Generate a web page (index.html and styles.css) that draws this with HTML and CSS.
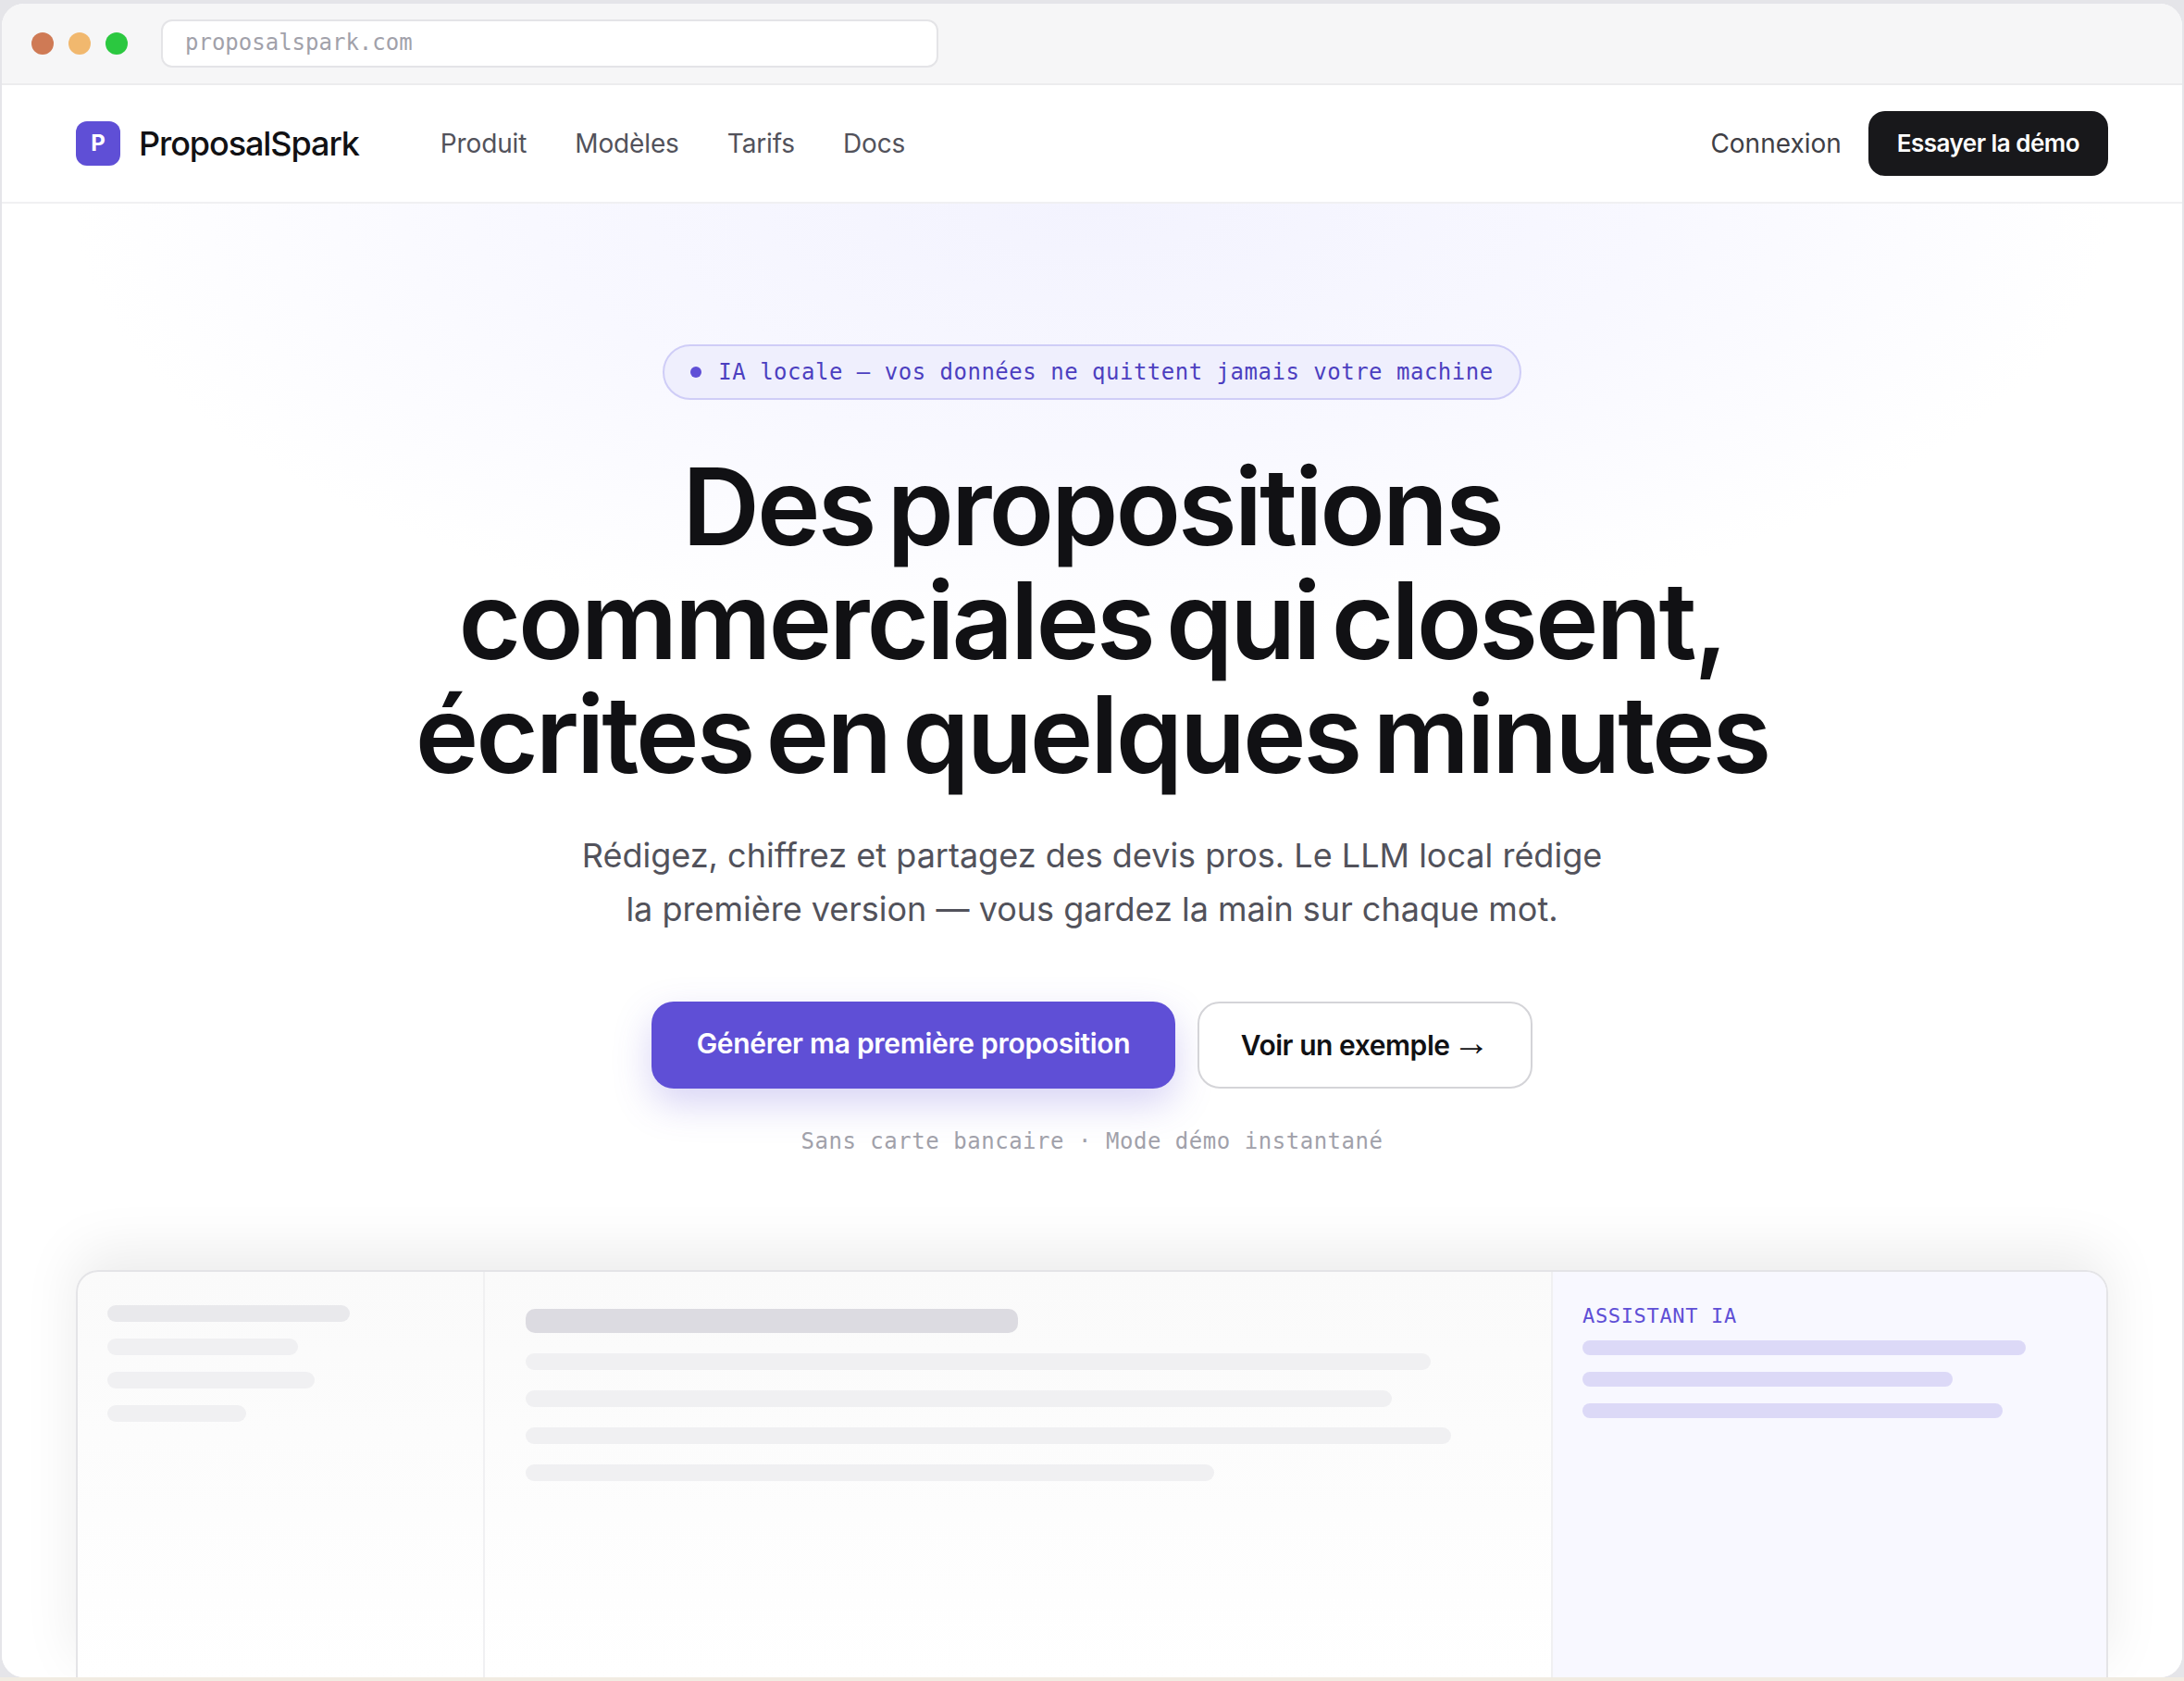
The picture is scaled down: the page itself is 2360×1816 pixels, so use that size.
FILE: index.html
```html
<!DOCTYPE html>
<html lang="fr">

<head>
  <meta charset="UTF-8">
  <meta name="viewport" content="width=device-width, initial-scale=1.0">
  <title>ProposalSpark</title>
  <link rel="stylesheet" href="styles.css">
</head>

<body>
  <div class="window">
    <div class="chrome">
      <div class="dots">
        <span class="dot red"></span>
        <span class="dot yellow"></span>
        <span class="dot green"></span>
      </div>
      <div class="address">proposalspark.com</div>
    </div>

    <nav class="nav">
      <a class="brand" href="#">
        <span class="brand_mark">P</span>
        <span class="brand_name">ProposalSpark</span>
      </a>
      <div class="nav_links">
        <a href="#">Produit</a>
        <a href="#">Modèles</a>
        <a href="#">Tarifs</a>
        <a href="#">Docs</a>
      </div>
      <div class="nav_actions">
        <a class="login" href="#">Connexion</a>
        <a class="btn_dark" href="#">Essayer la démo</a>
      </div>
    </nav>

    <main class="hero">
      <div class="pill"><span class="pill_dot"></span>IA locale — vos données ne quittent jamais votre machine</div>
      <h1>Des propositions<br>commerciales qui closent,<br>écrites en quelques minutes</h1>
      <p class="lead">Rédigez, chiffrez et partagez des devis pros. Le LLM local rédige<br>la première version — vous gardez la main sur chaque mot.</p>
      <div class="cta">
        <a class="btn_primary" href="#">Générer ma première proposition</a>
        <a class="btn_ghost" href="#">Voir un exemple <span class="arrow">→</span></a>
      </div>
      <p class="note">Sans carte bancaire · Mode démo instantané</p>

      <section class="mock">
        <div class="mock_side">
          <div class="bar bar_dark w262"></div>
          <div class="bar w206"></div>
          <div class="bar w224"></div>
          <div class="bar w150"></div>
        </div>
        <div class="mock_main">
          <div class="bar_title"></div>
          <div class="bar w978"></div>
          <div class="bar w936"></div>
          <div class="bar w1000"></div>
          <div class="bar w744"></div>
        </div>
        <div class="mock_ai">
          <div class="ai_label">ASSISTANT IA</div>
          <div class="bar_ai w479"></div>
          <div class="bar_ai w400"></div>
          <div class="bar_ai w454"></div>
        </div>
      </section>
    </main>
  </div>
</body>

</html>
```

FILE: styles.css
```css
* {
  box-sizing: border-box;
  margin: 0;
}

html,
body {
  height: 100%;
}

body {
  padding: 4px 2px;
  background: linear-gradient(#e5e5e9 calc(100% - 4px), #f1ece2 0);
  font-family: Inter, "Noto Sans", sans-serif;
  overflow: hidden;
}

a {
  color: inherit;
  text-decoration: none;
}

.window {
  display: flex;
  flex-direction: column;
  overflow: hidden;
  height: 100%;
  border-radius: 24px;
  background: #fff;
}

/* barre du navigateur */
.chrome {
  display: flex;
  align-items: center;
  gap: 36px;
  flex: none;
  height: 88px;
  padding: 0 32px;
  background: #f6f6f7;
  border-bottom: 2px solid #ececee;
}

.dots {
  display: flex;
  gap: 16px;
}

.dot {
  width: 24px;
  height: 24px;
  border-radius: 50%;
}

.red { background: #cf7a55; }
.yellow { background: #f1b86e; }
.green { background: #2bc840; }

.address {
  width: 840px;
  height: 52px;
  padding: 0 24px;
  border: 2px solid #e4e4e7;
  border-radius: 12px;
  background: #fff;
  color: #a1a1aa;
  font: 24px/46px "DejaVu Sans Mono", monospace;
}

/* nav */
.nav {
  display: flex;
  align-items: center;
  flex: none;
  height: 128px;
  padding: 0 80px;
  border-bottom: 2px solid #f0f0f2;
}

.brand {
  display: flex;
  align-items: center;
  gap: 20px;
}

.brand_mark {
  width: 48px;
  height: 48px;
  border-radius: 12px;
  background: #5f4fd6;
  color: #fff;
  font-size: 24px;
  font-weight: 700;
  line-height: 48px;
  text-align: center;
}

.brand_name {
  color: #111114;
  font-size: 36px;
  font-weight: 500;
  letter-spacing: -0.03em;
}

.nav_links {
  display: flex;
  gap: 52px;
  margin-left: 88px;
  color: #52525b;
  font-size: 28px;
  letter-spacing: -0.005em;
}

.nav_actions {
  display: flex;
  align-items: center;
  gap: 29px;
  margin-left: auto;
}

.login {
  color: #3f3f46;
  font-size: 28px;
}

.btn_dark {
  padding: 0 31px;
  height: 70px;
  border-radius: 18px;
  background: #18181b;
  color: #fff;
  font-size: 26px;
  font-weight: 600;
  line-height: 70px;
  letter-spacing: -0.02em;
}

/* hero */
.hero {
  display: flex;
  flex-direction: column;
  align-items: center;
  flex: 1;
  min-height: 0;
  padding: 152px 80px 0;
  background: radial-gradient(ellipse 1100px 480px at 50% 0, #f3f3fe 0%, #f8f8ff 55%, #fff 100%);
}

.pill {
  display: flex;
  align-items: center;
  gap: 18px;
  height: 60px;
  padding: 0 28px;
  border: 2px solid #cfcdf7;
  border-radius: 30px;
  background: #efeffd;
  color: #4c3fc0;
  font: 24px/1 "DejaVu Sans Mono", monospace;
  letter-spacing: 0.021em;
}

.pill_dot {
  width: 12px;
  height: 12px;
  border-radius: 50%;
  background: #5f4fd6;
}

h1 {
  margin-top: 54px;
  color: #111114;
  font-size: 116px;
  font-weight: 600;
  line-height: 123px;
  letter-spacing: -0.026em;
  word-spacing: -12px;
  text-align: center;
}

.lead {
  margin-top: 40px;
  color: #52525b;
  font-size: 36px;
  line-height: 58px;
  text-align: center;
}

.cta {
  display: flex;
  gap: 24px;
  margin-top: 71px;
}

.btn_primary,
.btn_ghost {
  height: 94px;
  border-radius: 24px;
  font-size: 30px;
  font-weight: 600;
  text-align: center;
}

.btn_primary {
  width: 566px;
  background: #5f4fd6;
  box-shadow: 0 16px 40px rgba(95, 79, 214, 0.25);
  color: #fff;
  line-height: 91px;
  letter-spacing: -0.01em;
}

.btn_ghost {
  width: 362px;
  border: 2px solid #d4d4d8;
  background: #fff;
  color: #111114;
  line-height: 90px;
  letter-spacing: -0.015em;
}

.arrow {
  margin-left: -4px;
  font-family: "Liberation Sans", sans-serif;
  font-size: 40px;
  font-weight: 400;
  line-height: 0;
}

.note {
  margin-top: 41px;
  color: #a1a1aa;
  font: 24px/32px "DejaVu Sans Mono", monospace;
  letter-spacing: 0.022em;
}

/* apercu */
.mock {
  display: grid;
  grid-template-columns: 440px 1154px 1fr;
  flex: 1;
  align-self: stretch;
  overflow: hidden;
  min-height: 0;
  margin-top: 123px;
  border: 2px solid #e4e4e7;
  border-bottom: 0;
  border-radius: 24px 24px 0 0;
  background: linear-gradient(#fafafa, #fff);
  box-shadow: 0 -20px 60px rgba(0, 0, 0, 0.08);
}

.mock_side,
.mock_main,
.mock_ai {
  display: flex;
  flex-direction: column;
}

.mock_side {
  gap: 18px;
  padding: 36px 32px;
  border-right: 2px solid #f0f0f2;
}

.mock_main {
  gap: 22px;
  padding: 40px 44px;
  border-right: 2px solid #f0f0f2;
}

.mock_ai {
  padding: 36px 32px;
  background: #f8f8ff;
}

.bar {
  height: 18px;
  border-radius: 9px;
  background: #f0f0f2;
}

.bar_dark {
  background: #e9e9ec;
}

.bar_title {
  width: 532px;
  height: 26px;
  border-radius: 10px;
  background: #dcdbe1;
}

.ai_label {
  margin-bottom: 14px;
  color: #5f4fd6;
  font: 22px/24px "DejaVu Sans Mono", monospace;
  letter-spacing: 0.03em;
}

.bar_ai {
  height: 16px;
  margin-bottom: 18px;
  border-radius: 8px;
  background: #dcd9f7;
}

.w150 { width: 150px; }
.w206 { width: 206px; }
.w224 { width: 224px; }
.w262 { width: 262px; }
.w400 { width: 400px; }
.w454 { width: 454px; }
.w479 { width: 479px; }
.w744 { width: 744px; }
.w936 { width: 936px; }
.w978 { width: 978px; }
.w1000 { width: 1000px; }
```
